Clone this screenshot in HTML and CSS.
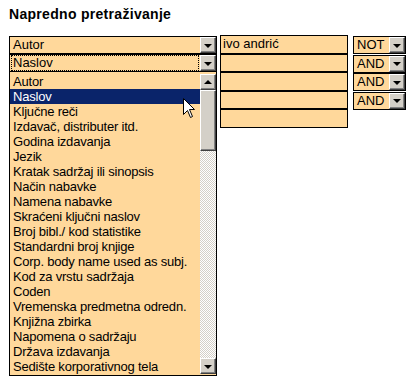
FILE: index.html
```html
<!DOCTYPE html>
<html lang="sr">
  <head>
    <meta charset="UTF-8" />
    <title>Napredno pretraživanje</title>
    <link rel="stylesheet" href="styles.css">
  </head>
  <body>
    <h1 class="title">Napredno pretraživanje</h1>

    <div class="search">
      <div class="col fields">
        <div class="select field"><span class="value">Autor</span><span class="arrow"></span></div>
        <div class="select field focused"><span class="value">Naslov</span><span class="arrow"></span></div>
        <div class="list">
          <ul class="options">
            <li>Autor</li>
            <li class="selected">Naslov</li>
            <li>Ključne reči</li>
            <li>Izdavač, distributer itd.</li>
            <li>Godina izdavanja</li>
            <li>Jezik</li>
            <li>Kratak sadržaj ili sinopsis</li>
            <li>Način nabavke</li>
            <li>Namena nabavke</li>
            <li>Skraćeni ključni naslov</li>
            <li>Broj bibl./ kod statistike</li>
            <li>Standardni broj knjige</li>
            <li>Corp. body name used as subj.</li>
            <li>Kod za vrstu sadržaja</li>
            <li>Coden</li>
            <li>Vremenska predmetna odredn.</li>
            <li>Knjižna zbirka</li>
            <li>Napomena o sadržaju</li>
            <li>Država izdavanja</li>
            <li>Sedište korporativnog tela</li>
          </ul>
          <div class="scrollbar">
            <span class="btn"><span class="arrow-up"></span></span>
            <span class="thumb"></span>
            <span class="track"></span>
            <span class="btn"><span class="arrow-down"></span></span>
          </div>
          <svg class="cursor" width="13" height="21" viewBox="0 0 13 21">
            <path d="M0.5 0.5 L0.5 16.5 L4.5 12.5 L7.5 19.5 L9.5 18.5 L6.5 11.5 L11.5 11.5 Z" fill="#fff" stroke="#000" stroke-width="1"/>
          </svg>
        </div>
      </div>

      <div class="col terms">
        <div class="text">ivo andrić</div>
        <div class="text"></div>
        <div class="text"></div>
        <div class="text"></div>
        <div class="text"></div>
      </div>

      <div class="col ops">
        <div class="select op"><span class="value">NOT</span><span class="arrow"></span></div>
        <div class="select op"><span class="value">AND</span><span class="arrow"></span></div>
        <div class="select op"><span class="value">AND</span><span class="arrow"></span></div>
        <div class="select op"><span class="value">AND</span><span class="arrow"></span></div>
      </div>
    </div>
  </body>
</html>
```

FILE: styles.css
```css
body {
  margin: 0;
  background: #fff;
  font-family: "Liberation Sans", Arial, sans-serif;
  font-size: 13px;
  color: #000;
}

.title {
  margin: 6px 0 0 9px;
  font-size: 14px;
  line-height: 16px;
  letter-spacing: 0.3px;
  font-weight: bold;
}

.search {
  display: flex;
  align-items: flex-start;
  margin: 14px 0 0 9px;
}

.col {
  display: flex;
  flex-direction: column;
}

.terms {
  margin-left: 3px;
  margin-top: -1px;
}

.ops {
  margin-left: 5px;
}

.select,
.text {
  box-sizing: border-box;
  border: 1px solid #000;
  background: #ffd89b;
  line-height: 16px;
}

.select {
  height: 18px;
  display: flex;
  align-items: center;
}

.select .value {
  flex: 1;
  padding-left: 3px;
}

.field {
  width: 208px;
}

.focused .value {
  outline: 1px dotted #000;
  outline-offset: -1px;
  margin: 0 1px;
  padding-left: 2px;
  line-height: 16px;
}

.text {
  width: 128px;
  height: 18.6px;
  padding-left: 2px;
}

.op {
  width: 53px;
  margin-bottom: 0.6px;
}

.arrow,
.btn {
  box-sizing: border-box;
  width: 16px;
  height: 16px;
  background: #d4d0c8;
  border: 1px solid;
  border-color: #fff #404040 #404040 #fff;
  box-shadow: inset -1px -1px #808080;
  display: flex;
  align-items: center;
  justify-content: center;
}

.arrow::after,
.arrow-down {
  content: "";
  border-left: 4px solid transparent;
  border-right: 4px solid transparent;
  border-top: 4px solid #000;
  margin: 1px 1px 0 0;
}

.arrow-up {
  border-left: 4px solid transparent;
  border-right: 4px solid transparent;
  border-bottom: 4px solid #000;
  margin: 0 1px 1px 0;
}

.list {
  position: relative;
  box-sizing: border-box;
  width: 208px;
  height: 304px;
  border: 1px solid #000;
  border-top: none;
  background: #ffd89b;
  display: flex;
}

.options {
  flex: 1;
  margin: 0;
  padding: 2px 0 0;
  list-style: none;
}

.options li {
  height: 15px;
  line-height: 15px;
  padding-left: 3px;
  letter-spacing: -0.2px;
  white-space: nowrap;
}

.options .selected {
  background: #0a246a;
  color: #fff;
}

.scrollbar {
  width: 16px;
  padding-top: 2px;
  display: flex;
  flex-direction: column;
}

.thumb {
  box-sizing: border-box;
  height: 61px;
  background: #d4d0c8;
  border: 1px solid;
  border-color: #fff #404040 #404040 #fff;
  box-shadow: inset -1px -1px #808080;
}

.track {
  flex: 1;
  background: repeating-conic-gradient(#d4d0c8 0 25%, #fff 0 50%) 0 0 / 2px 2px;
}

.btn:last-child {
  margin-bottom: 1px;
}

.cursor {
  position: absolute;
  left: 173px;
  top: 26px;
}
```
